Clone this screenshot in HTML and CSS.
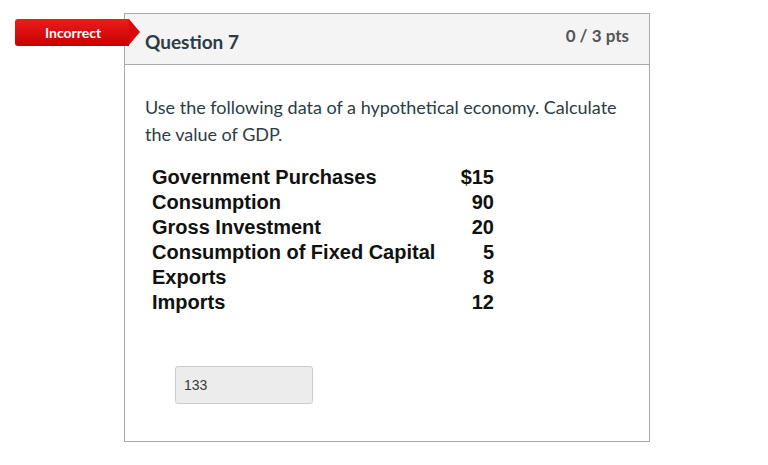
FILE: index.html
```html
<!DOCTYPE html>
<html>
<head>
<meta charset="utf-8">
<link rel="stylesheet" href="styles.css">
</head>
<body>
<div class="page">
  <div class="question">
    <div class="badge">Incorrect</div>
    <div class="header">
      <span class="title">Question 7</span>
      <span class="pts">0 / 3 pts</span>
    </div>
    <div class="body">
      <p class="text">Use the following data of a hypothetical economy. Calculate the value of GDP.</p>
      <div class="data">
        <div class="row"><span>Government Purchases</span><span>$15</span></div>
        <div class="row"><span>Consumption</span><span>90</span></div>
        <div class="row"><span>Gross Investment</span><span>20</span></div>
        <div class="row"><span>Consumption of Fixed Capital</span><span>5</span></div>
        <div class="row"><span>Exports</span><span>8</span></div>
        <div class="row"><span>Imports</span><span>12</span></div>
      </div>
      <div class="answer">133</div>
    </div>
  </div>
</div>
</body>
</html>
```
FILE: styles.css
```css
html, body {
  margin: 0;
  padding: 0;
  background: #fff;
}
.page {
  padding: 13px 0 0 124px;
}
.question {
  position: relative;
  width: 524px;
  height: 427px;
  border: 1px solid #aaa;
  font-family: Lato, "Open Sans", sans-serif;
  color: #2d3b45;
}
.badge {
  position: absolute;
  left: -110px;
  top: 5px;
  width: 114px;
  height: 27px;
  background: linear-gradient(#ec1c1c, #c80000);
  border-radius: 3px 0 0 3px;
  color: #fff;
  font-weight: bold;
  font-size: 14px;
  line-height: 27px;
  text-indent: 30px;
  box-sizing: border-box;
}
.badge::after {
  content: "";
  position: absolute;
  right: -11px;
  top: 0;
  border-top: 13.5px solid transparent;
  border-bottom: 13.5px solid transparent;
  border-left: 11px solid #d90a0a;
}
.header {
  display: flex;
  justify-content: space-between;
  align-items: center;
  height: 50px;
  background: #f4f4f4;
  border-bottom: 1px solid #aaa;
  padding: 0 20px 0 20px;
}
.title {
  font-size: 19px;
  font-weight: bold;
  padding-top: 4px;
}
.pts {
  font-size: 17px;
  font-weight: bold;
  color: #555;
  padding-bottom: 7px;
}
.body {
  padding: 29px 20px 0 20px;
}
.text {
  margin: 0;
  font-size: 18px;
  line-height: 27px;
  width: 480px;
  color: #2d3b45;
}
.data {
  width: 342px;
  margin: 17px 0 0 7px;
  font-family: "Liberation Sans", Arial, sans-serif;
  font-weight: bold;
  font-size: 20px;
  color: #111;
}
.row {
  display: flex;
  justify-content: space-between;
  height: 25px;
  line-height: 25px;
}
.answer {
  margin: 51px 0 0 30px;
  width: 138px;
  height: 38px;
  box-sizing: border-box;
  background: #ececec;
  border: 1px solid #ccc;
  border-radius: 3px;
  font-family: "Liberation Sans", Arial, sans-serif;
  font-size: 14px;
  color: #3a3a3a;
  line-height: 36px;
  padding-left: 8px;
}
```
